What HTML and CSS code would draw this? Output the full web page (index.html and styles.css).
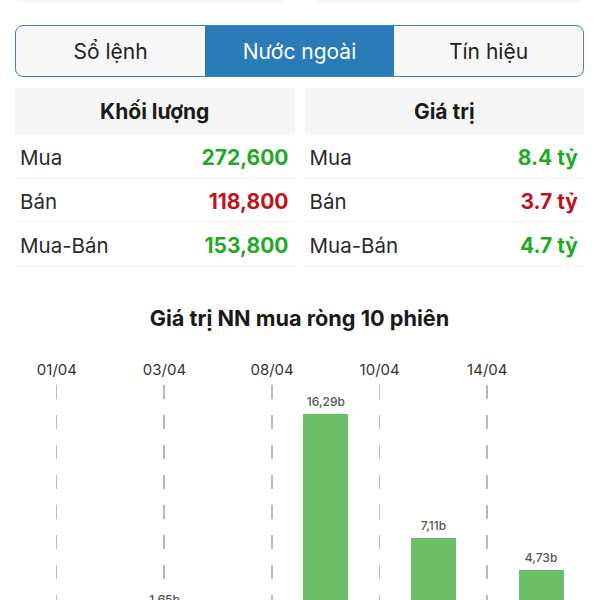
FILE: index.html
```html
<!DOCTYPE html>
<html lang="vi">
<head>
    <meta charset="UTF-8">
    <meta name="viewport" content="width=device-width, initial-scale=1.0">
    <title>Nước ngoài</title>
    <link rel="stylesheet" href="styles.css">
</head>
<body>
    <div class="page">
        <div class="prev-card">
            <div></div>
            <div></div>
        </div>

        <div class="segmented">
            <div class="segment">Sổ lệnh</div>
            <div class="segment active">Nước ngoài</div>
            <div class="segment">Tín hiệu</div>
        </div>

        <div class="stats">
            <div class="stats-col">
                <div class="stats-head">Khối lượng</div>
                <div class="stats-row"><span>Mua</span><span class="up">272,600</span></div>
                <div class="stats-row"><span>Bán</span><span class="down">118,800</span></div>
                <div class="stats-row"><span>Mua-Bán</span><span class="up">153,800</span></div>
            </div>
            <div class="stats-col">
                <div class="stats-head">Giá trị</div>
                <div class="stats-row"><span>Mua</span><span class="up">8.4 tỷ</span></div>
                <div class="stats-row"><span>Bán</span><span class="down">3.7 tỷ</span></div>
                <div class="stats-row"><span>Mua-Bán</span><span class="up">4.7 tỷ</span></div>
            </div>
        </div>

        <h2 class="chart-title">Giá trị NN mua ròng 10 phiên</h2>

        <div class="chart">
            <div class="slot"><div class="date">01/04</div><div class="plot grid"></div></div>
            <div class="slot"><div class="date"></div><div class="plot"></div></div>
            <div class="slot"><div class="date">03/04</div><div class="plot grid"><div class="value">1,65b</div><div class="bar" style="height: 22px"></div></div></div>
            <div class="slot"><div class="date"></div><div class="plot"></div></div>
            <div class="slot"><div class="date">08/04</div><div class="plot grid"></div></div>
            <div class="slot"><div class="date"></div><div class="plot"><div class="value">16,29b</div><div class="bar" style="height: 220px"></div></div></div>
            <div class="slot"><div class="date">10/04</div><div class="plot grid"></div></div>
            <div class="slot"><div class="date"></div><div class="plot"><div class="value">7,11b</div><div class="bar" style="height: 96px"></div></div></div>
            <div class="slot"><div class="date">14/04</div><div class="plot grid"></div></div>
            <div class="slot"><div class="date"></div><div class="plot"><div class="value">4,73b</div><div class="bar" style="height: 64px"></div></div></div>
        </div>
    </div>
</body>
</html>
```

FILE: styles.css
```css
html, body {
    overflow: hidden;
}

body {
    font-family: Inter, "Noto Sans", sans-serif;
    background-color: #fff;
    color: #222;
    margin: 0;
}

.page {
    padding: 0 16px 0 15px;
}

.prev-card {
    display: grid;
    grid-template-columns: 1fr 1fr;
    gap: 30px;
    padding: 0 2px;
}

.prev-card div {
    height: 3px;
    background-color: #f8f8f8;
}

.segmented {
    display: flex;
    margin-top: 22px;
    height: 52px;
    border: 1.5px solid #3a84c0;
    border-radius: 8px;
    overflow: hidden;
    background-color: #f7f7f7;
    box-sizing: border-box;
}

.segment {
    flex: 1;
    display: flex;
    align-items: center;
    justify-content: center;
    font-size: 21px;
    color: #222;
}

.segment.active {
    background-color: #2a7bb9;
    color: #fff;
}

.stats {
    display: grid;
    grid-template-columns: 1fr 1fr;
    gap: 10px;
    margin-top: 11px;
}

.stats-head {
    height: 46px;
    display: flex;
    align-items: center;
    justify-content: center;
    background-color: #f5f5f5;
    font-size: 21px;
    font-weight: 700;
    color: #1a1a1a;
}

.stats-row {
    height: 44px;
    display: flex;
    align-items: center;
    justify-content: space-between;
    padding: 3px 6px 0 5px;
    border-bottom: 1px solid #efefef;
    box-sizing: border-box;
    font-size: 20.5px;
    color: #2a2a2a;
}

.stats-row span:last-child {
    font-size: 21px;
    font-weight: 700;
}

.up {
    color: #1faa24;
}

.down {
    color: #c1121c;
}

.chart-title {
    margin: 40px 0 0;
    text-align: center;
    font-size: 21.7px;
    font-weight: 700;
    line-height: 24px;
    color: #1a1a1a;
}

.chart {
    display: flex;
    margin: 31px 0 0 15px;
    width: 538px;
}

.slot {
    flex: 1;
    display: flex;
    flex-direction: column;
    align-items: center;
}

.date {
    height: 18px;
    line-height: 18px;
    font-size: 15px;
    color: #333;
    white-space: nowrap;
}

.plot {
    position: relative;
    margin-top: 6px;
    height: 249px;
    width: 100%;
    display: flex;
    flex-direction: column;
    justify-content: flex-end;
    align-items: center;
}

.plot.grid::before {
    content: "";
    position: absolute;
    top: 0;
    bottom: 0;
    left: calc(50% - 1px);
    width: 1.5px;
    background: repeating-linear-gradient(to bottom, #b8b8b8 0 14px, transparent 14px 30px);
}

.value {
    font-size: 12px;
    font-weight: 500;
    color: #555;
    margin-bottom: 5px;
    position: relative;
}

.bar {
    width: 45px;
    background-color: #6cbd68;
    position: relative;
}
```
